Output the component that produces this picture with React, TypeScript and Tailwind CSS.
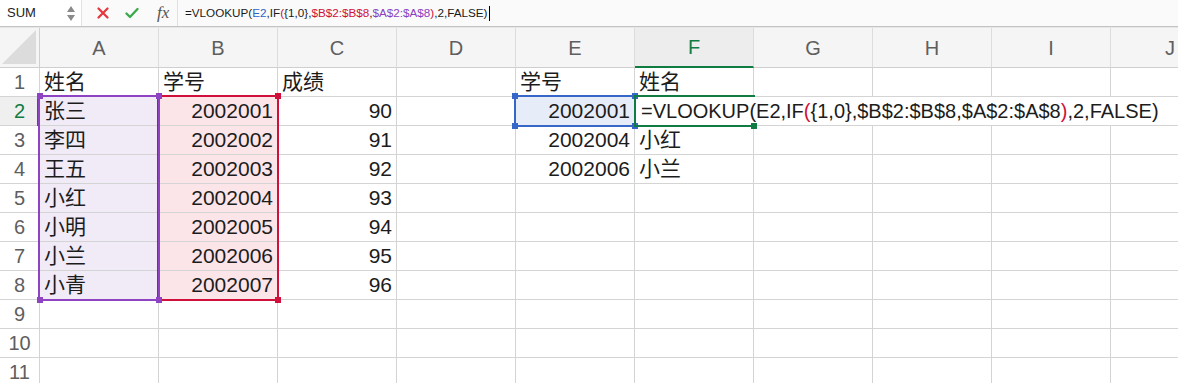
import React from "react";

const COLS = ["A", "B", "C", "D", "E", "F", "G", "H", "I", "J"];
const ROWS = [1, 2, 3, 4, 5, 6, 7, 8, 9, 10, 11];

type Cell = { v: React.ReactNode; right?: boolean };

const names = ["张三", "李四", "王五", "小红", "小明", "小兰", "小青"];
const data: Record<string, Cell> = {
  A1: { v: "姓名" },
  B1: { v: "学号" },
  C1: { v: "成绩" },
  E1: { v: "学号" },
  F1: { v: "姓名" },
  E2: { v: "2002001", right: true },
  E3: { v: "2002004", right: true },
  F3: { v: "小红" },
  E4: { v: "2002006", right: true },
  F4: { v: "小兰" },
};
names.forEach((n, i) => {
  data[`A${i + 2}`] = { v: n };
  data[`B${i + 2}`] = { v: String(2002001 + i), right: true };
  data[`C${i + 2}`] = { v: String(90 + i), right: true };
});

const fill: Record<string, string> = {};
for (let r = 2; r <= 8; r++) {
  fill[`A${r}`] = "bg-[#f1eaf7]";
  fill[`B${r}`] = "bg-[#fbe5e9]";
}
fill["E2"] = "bg-[#e7edf8]";

const noRight = new Set(["F2", "G2", "H2", "I2", "J2"]);

function CellFormula() {
  return (
    <span className="whitespace-nowrap text-[20px] text-[#1c1c1c]">
      =VLOOKUP(E2,IF<span className="text-[#d0103a]">(</span>
      {"{1,0},$B$2:$B$8,$A$2:$A$8"}
      <span className="text-[#d0103a]">)</span>,2,FALSE)
    </span>
  );
}

function Handle({ x, y, color }: { x: number; y: number; color: string }) {
  return (
    <div
      className={`absolute w-[6px] h-[6px] ${color}`}
      style={{ left: x - 3, top: y - 3 }}
    />
  );
}

export default function App() {
  return (
    <div className="relative w-[1178px] h-[383px] overflow-hidden bg-white font-['Liberation_Sans','Noto_Sans_CJK_SC',sans-serif]">
      {/* formula bar */}
      <div className="flex h-[26px] bg-[#fafafa]">
        <div className="flex w-[82px] items-center justify-between bg-white border-r border-[#e2e2e2] pl-[7px] pr-[5px]">
          <span className="text-[13px] text-[#222]">SUM</span>
          <svg width="10" height="18" viewBox="0 0 10 18">
            <path d="M5 2 L9 8 L1 8 Z" fill="#8a8a8a" />
            <path d="M1 11 L9 11 L5 17 Z" fill="#8a8a8a" />
          </svg>
        </div>
        <div className="flex w-[96px] items-center border-r border-[#e0e0e0]">
          <svg width="12" height="12" viewBox="0 0 12 12" className="ml-[15px]">
            <path d="M1.5 1.5 L10.5 10.5 M10.5 1.5 L1.5 10.5" stroke="#e5363d" strokeWidth="2.2" strokeLinecap="round" />
          </svg>
          <svg width="14" height="12" viewBox="0 0 14 12" className="ml-[16px]">
            <path d="M1.5 6.5 L5 10 L12.5 2" stroke="#3aa94b" strokeWidth="2.3" fill="none" strokeLinecap="round" strokeLinejoin="round" />
          </svg>
          <span className="ml-[18px] text-[17px] italic text-[#555] font-['Liberation_Serif',serif]">fx</span>
        </div>
        <div className="flex items-center pl-[7px] text-[11.7px] text-[#1a1a1a] whitespace-nowrap">
          =VLOOKUP(<span className="text-[#2f62c8]">E2</span>,IF
          <span className="text-[#d0103a]">(</span>
          {"{1,0},"}
          <span className="text-[#d0103a]">$B$2:$B$8</span>,
          <span className="text-[#8b3fc0]">$A$2:$A$8</span>
          <span className="text-[#d0103a]">)</span>,2,FALSE)
          <span className="ml-[1px] inline-block w-[1px] h-[15px] bg-black" />
        </div>
      </div>
      <div className="h-[1px] bg-[#c4c4c4]" />
      <div className="h-[1px] bg-[#e6e6e6]" />

      {/* column header */}
      <div className="flex h-[40px]">
        <div className="relative w-[40px] shrink-0 bg-[#f5f5f5] border-r border-b border-[#cfcfcf]">
          <svg width="36" height="36" viewBox="0 0 36 36" className="absolute right-[2px] bottom-[2px]">
            <path d="M35 1 L35 35 L1 35 Z" fill="#dcdcdc" />
          </svg>
        </div>
        {COLS.map((c) => (
          <div
            key={c}
            className={`flex w-[119px] shrink-0 items-center justify-center text-[20px] ${
              c === "F"
                ? "bg-[#ededed] text-[#107c41] border-b-2 border-b-[#107c41] border-r border-r-[#dcdcdc]"
                : "bg-[#f5f5f5] text-[#5e5e5e] border-b border-b-[#cfcfcf] border-r border-r-[#dcdcdc]"
            }`}
          >
            {c}
          </div>
        ))}
      </div>

      {/* rows */}
      {ROWS.map((r) => (
        <div key={r} className="flex h-[29px]">
          <div
            className={`flex w-[40px] shrink-0 items-center justify-center border-r border-b border-[#d4d4d4] text-[20px] ${
              r === 2 ? "bg-[#efefef] text-[#107c41]" : "bg-white text-[#5e5e5e]"
            }`}
          >
            {r}
          </div>
          {COLS.map((c) => {
            const key = `${c}${r}`;
            const cell = data[key];
            const isF2 = key === "F2";
            return (
              <div
                key={key}
                className={`relative flex w-[119px] shrink-0 items-center border-b border-[#d4d4d4] ${
                  noRight.has(key) ? "" : "border-r"
                } ${fill[key] ?? ""} ${cell?.right ? "justify-end pr-[4px]" : "pl-[4px]"} ${
                  isF2 ? "overflow-visible z-10" : "overflow-hidden"
                }`}
              >
                {isF2 ? (
                  <div className="pl-[2px]">
                    <CellFormula />
                  </div>
                ) : cell ? (
                  <span className="text-[21px] text-[#1c1c1c] whitespace-nowrap">{cell.v}</span>
                ) : null}
              </div>
            );
          })}
        </div>
      ))}

      {/* selection overlays */}
      <div className="pointer-events-none absolute inset-0 z-20">
        <div className="absolute left-[37px] top-[97px] w-[2px] h-[29px] bg-[#107c41]" />
        <div className="absolute left-[157px] top-[95px] w-[122px] h-[206px] border-2 border-[#d0103a]" />
        <Handle x={278} y={96} color="bg-[#d0103a]" />
        <Handle x={278} y={300} color="bg-[#d0103a]" />
        <div className="absolute left-[38px] top-[95px] w-[122px] h-[206px] border-2 border-[#8e44c2]" />
        <Handle x={159} y={96} color="bg-[#8e44c2]" />
        <Handle x={159} y={300} color="bg-[#8e44c2]" />
        <Handle x={40} y={96} color="bg-[#8e44c2]" />
        <Handle x={40} y={300} color="bg-[#8e44c2]" />
        <div className="absolute left-[514px] top-[95px] w-[122px] h-[32px] border-2 border-[#3566c8]" />
        <Handle x={515} y={96} color="bg-[#3566c8]" />
        <Handle x={635} y={96} color="bg-[#3566c8]" />
        <Handle x={515} y={126} color="bg-[#3566c8]" />
        <Handle x={635} y={126} color="bg-[#3566c8]" />
        <div className="absolute left-[634px] top-[95px] w-[121px] h-[32px] border-t-2 border-l-2 border-b-2 border-[#107c41]" />
        <Handle x={754} y={126} color="bg-[#107c41]" />
      </div>
    </div>
  );
}
